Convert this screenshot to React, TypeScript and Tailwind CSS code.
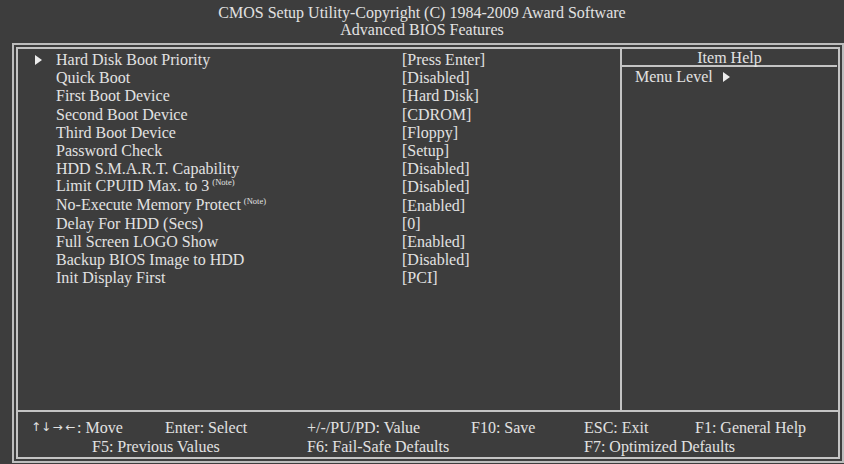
import React from "react";

const items: { label: string; note?: boolean; value: string; arrow?: boolean }[] = [
  { label: "Hard Disk Boot Priority", value: "[Press Enter]", arrow: true },
  { label: "Quick Boot", value: "[Disabled]" },
  { label: "First Boot Device", value: "[Hard Disk]" },
  { label: "Second Boot Device", value: "[CDROM]" },
  { label: "Third Boot Device", value: "[Floppy]" },
  { label: "Password Check", value: "[Setup]" },
  { label: "HDD S.M.A.R.T. Capability", value: "[Disabled]" },
  { label: "Limit CPUID Max. to 3", note: true, value: "[Disabled]" },
  { label: "No-Execute Memory Protect", note: true, value: "[Enabled]" },
  { label: "Delay For HDD (Secs)", value: "[0]" },
  { label: "Full Screen LOGO Show", value: "[Enabled]" },
  { label: "Backup BIOS Image to HDD", value: "[Disabled]" },
  { label: "Init Display First", value: "[PCI]" },
];

function Tri() {
  return (
    <svg width="7" height="10" viewBox="0 0 7 10" className="inline-block">
      <path d="M0 0 L7 5 L0 10 Z" fill="#ececec" />
    </svg>
  );
}

const arrowFont = { fontFamily: '"DejaVu Sans", sans-serif' };

export default function App() {
  return (
    <div
      className="w-[844px] h-[464px] bg-[#3d3d3d] text-[#e2e2e2] text-[16px] overflow-hidden"
      style={{ fontFamily: '"Liberation Serif", "Times New Roman", serif' }}
    >
      <div className="h-[43px] pt-[4px] text-center leading-[17px]">
        <div>CMOS Setup Utility-Copyright (C) 1984-2009 Award Software</div>
        <div>Advanced BIOS Features</div>
      </div>
      <div className="ml-[12px] w-[832px] h-[420px] border-2 border-[#bdbdbd] pl-[2px] pr-[2px] pt-[2px] pb-[2px]">
        <div className="h-full w-[824px] border-2 border-[#c4c4c4] flex flex-col">
          <div className="flex h-[363px] border-b-2 border-[#c4c4c4]">
            <div className="w-[604px] border-r-2 border-[#c4c4c4] pt-[2px] leading-[18.2px]">
              {items.map((it) => (
                <div key={it.label} className="flex h-[18.2px] items-center">
                  <div className="w-[38px] pl-[17px] flex items-center">
                    {it.arrow ? <Tri /> : null}
                  </div>
                  <div className="w-[346px] whitespace-nowrap">
                    {it.label}
                    {it.note ? (
                      <span className="text-[8.5px] ml-[3px] relative top-[-6px]">(Note)</span>
                    ) : null}
                  </div>
                  <div className="whitespace-nowrap">{it.value}</div>
                </div>
              ))}
            </div>
            <div className="flex-1 flex flex-col">
              <div className="h-[18px] leading-[18px] text-center border-b-2 border-[#c4c4c4] mr-[1px]">
                Item Help
              </div>
              <div className="pl-[13px] pt-[1px] leading-[18px] flex items-center gap-[10px]">
                <span>Menu Level</span>
                <Tri />
              </div>
            </div>
          </div>
          <div className="flex-1 pt-[6px] leading-[19px] whitespace-nowrap">
            <div className="flex pl-[13px]">
              <span className="w-[134px] flex items-center">
                <span className="flex items-center text-[12px]" style={arrowFont}>
                  <span className="w-[10px] text-center">↑</span>
                  <span className="w-[10px] text-center">↓</span>
                  <span className="w-[13px] text-center">→</span>
                  <span className="w-[13px] text-center">←</span>
                </span>
                <span>: Move</span>
              </span>
              <span className="w-[142px]">Enter: Select</span>
              <span className="w-[164px]">+/-/PU/PD: Value</span>
              <span className="w-[113px]">F10: Save</span>
              <span className="w-[111px]">ESC: Exit</span>
              <span>F1: General Help</span>
            </div>
            <div className="flex pl-[74px]">
              <span className="w-[215px]">F5: Previous Values</span>
              <span className="w-[277px]">F6: Fail-Safe Defaults</span>
              <span>F7: Optimized Defaults</span>
            </div>
          </div>
        </div>
      </div>
    </div>
  );
}
